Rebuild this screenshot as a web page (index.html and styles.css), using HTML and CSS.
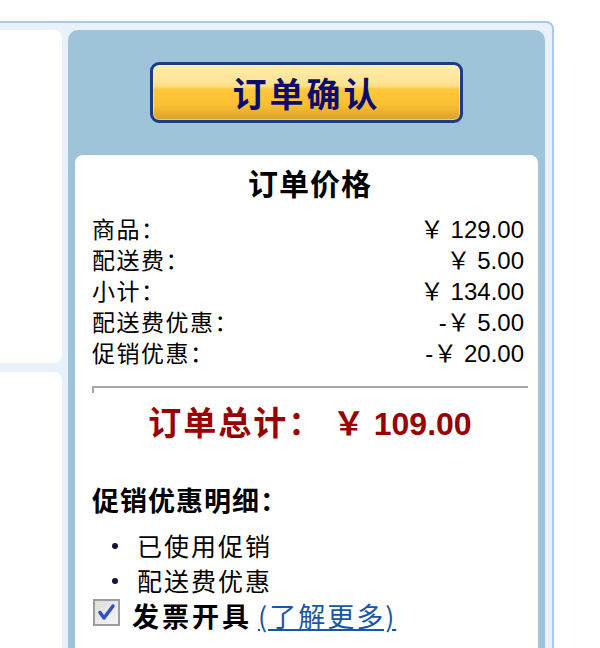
FILE: index.html
```html
<!DOCTYPE html>
<html lang="zh-CN">
<head>
  <meta charset="UTF-8">
  <title>订单确认</title>
  <link rel="stylesheet" href="styles.css">
</head>
<body>

  <div class="frame">
    <div class="side">
      <div class="side-box"></div>
      <div class="side-box side-box-low"></div>
    </div>

    <div class="panel">
      <button class="confirm">订单确认</button>

      <div class="summary">
        <h2>订单价格</h2>

        <div class="prices">
          <div class="row"><span class="label">商品：</span><span class="val">￥ 129.00</span></div>
          <div class="row"><span class="label">配送费：</span><span class="val">￥ 5.00</span></div>
          <div class="row"><span class="label">小计：</span><span class="val">￥ 134.00</span></div>
          <div class="row"><span class="label">配送费优惠：</span><span class="val">-￥ 5.00</span></div>
          <div class="row"><span class="label">促销优惠：</span><span class="val">-￥ 20.00</span></div>
        </div>

        <hr>

        <div class="total">订单总计：&nbsp;<span class="total-num">￥ 109.00</span></div>

        <h3>促销优惠明细：</h3>
        <ul class="promos">
          <li>已使用促销</li>
          <li>配送费优惠</li>
        </ul>

        <div class="invoice">
          <svg class="check" width="27" height="27" viewBox="0 0 27 27">
            <defs>
              <linearGradient id="boxfill" x1="0" y1="0" x2="1" y2="1">
                <stop offset="0" stop-color="#dcdcdc"/>
                <stop offset="1" stop-color="#f6f6f6"/>
              </linearGradient>
            </defs>
            <rect x="1" y="1" width="25" height="25" fill="url(#boxfill)" stroke="#9d9d9d" stroke-width="2"/>
            <path d="M7 13.5 L11 19 L20 7" fill="none" stroke="#2f51c0" stroke-width="3.5" stroke-linecap="round" stroke-linejoin="round"/>
          </svg>
          <b>发票开具</b>
          <a href="#">(了解更多)</a>
        </div>
      </div>
    </div>
  </div>

</body>
</html>
```

FILE: styles.css
```css
body {
  margin: 0;
  background: #fff;
  color: #000;
  font-family: "Noto Sans CJK SC", sans-serif;
  overflow: hidden;
}

/* outer light blue frame */
.frame {
  display: flex;
  gap: 6px;
  width: 564px;
  height: 627px;
  margin: 21px 0 0 -10px;
  padding: 7px 7px 0 0;
  box-sizing: border-box;
  background: #e9f1fb;
  border-top: 2px solid #a9cbe9;
  border-right: 2px solid #a9cbe9;
  border-radius: 0 8px 0 0;
}
.side {
  width: 72px;
  display: flex;
  flex-direction: column;
  gap: 9px;
}
.side-box {
  height: 333px;
  background: #fff;
  border-radius: 0 8px 8px 0;
}
.side-box-low {
  flex: 1;
  border-radius: 0 8px 0 0;
}

/* right column */
.panel {
  flex: 1;
  display: flex;
  flex-direction: column;
  padding: 32px 7px 0;
  background: #9fc4d9;
  border-radius: 10px 10px 0 0;
}
.confirm {
  align-self: center;
  width: 313px;
  height: 61px;
  padding: 0;
  border: 3px solid #1b3c8b;
  border-radius: 9px;
  background: linear-gradient(to bottom, #ffeeb0 0%, #ffe18c 38%, #ffc83a 44%, #fbc032 72%, #d9a02c 100%);
  box-shadow: inset 0 0 0 1px rgba(255, 255, 255, 0.45);
  color: #0c0c70;
  font-family: "Noto Sans CJK SC", sans-serif;
  font-size: 34px;
  font-weight: bold;
  letter-spacing: 3px;
  line-height: 55px;
  cursor: pointer;
}

.summary {
  flex: 1;
  margin-top: 32px;
  padding: 9px 10px 0 17px;
  background: #fff;
  border-radius: 8px 8px 0 0;
}
.summary h2 {
  margin: 0;
  text-align: center;
  font-size: 30px;
  line-height: 36px;
  letter-spacing: 1px;
}

.prices {
  margin-top: 13px;
  padding-right: 4px;
}
.row {
  display: flex;
  justify-content: space-between;
  align-items: baseline;
  height: 31px;
  line-height: 31px;
}
.label {
  font-size: 23px;
  letter-spacing: 1.5px;
}
.val {
  font-family: "Liberation Sans", "Noto Sans CJK SC", sans-serif;
  font-size: 24px;
}

hr {
  height: 5px;
  margin: 18px 0 0;
  border: 0;
  border-top: 2px solid #a6a6a6;
  border-left: 2px solid #a6a6a6;
}

.total {
  margin-top: 8px;
  text-align: center;
  color: #990000;
  font-size: 33px;
  font-weight: bold;
  letter-spacing: 2px;
  line-height: 40px;
}
.total-num {
  font-family: "Liberation Sans", "Noto Sans CJK SC", sans-serif;
  font-size: 32px;
  letter-spacing: 0;
}

.summary h3 {
  margin: 40px 0 0;
  font-size: 27px;
  letter-spacing: 1px;
  line-height: 32px;
}
.promos {
  list-style: none;
  margin: 12px 0 0;
  padding: 0;
}
.promos li {
  display: flex;
  align-items: center;
  font-size: 25px;
  letter-spacing: 2px;
  line-height: 35px;
}
.promos li::before {
  content: "";
  width: 6px;
  height: 6px;
  margin: 0 19px 0 20px;
  background: #15153a;
  border-radius: 50%;
}

.invoice {
  display: flex;
  align-items: center;
  height: 32px;
  margin-top: 2px;
}
.check {
  margin: 0 12px 8px 1px;
}
.invoice b {
  font-size: 27px;
  letter-spacing: 3px;
  line-height: 32px;
}
.invoice a {
  margin-left: 6px;
  color: #1a56a6;
  font-size: 27px;
  letter-spacing: 2px;
  line-height: 32px;
}
```
